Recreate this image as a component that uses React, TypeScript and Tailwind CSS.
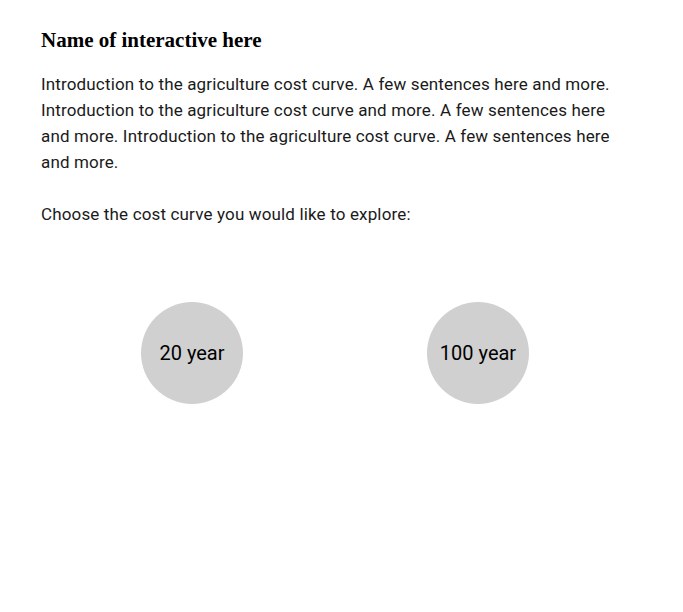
export default function App() {
  const options = ["20 year", "100 year"];

  return (
    <main className="min-h-[612px] bg-white px-[41px] pt-[28px] text-[#1a1a1a]">
      <h1 className="font-['Liberation_Serif',serif] text-[21px] font-bold leading-[24px] text-black">
        Name of interactive here
      </h1>
      <p className="mt-[19px] w-[580px] font-['Roboto',sans-serif] text-[17px] leading-[26px] tracking-[0.15px]">
        Introduction to the agriculture cost curve. A few sentences here and
        more. Introduction to the agriculture cost curve and more. A few
        sentences here and more. Introduction to the agriculture cost curve. A
        few sentences here and more.
      </p>
      <p className="mt-[26px] font-['Roboto',sans-serif] text-[17px] leading-[26px] tracking-[0.15px]">
        Choose the cost curve you would like to explore:
      </p>
      <div className="mt-[75px] grid w-[580px] grid-cols-2 pl-[8px]">
        {options.map((option) => (
          <div key={option} className="flex justify-center">
            <button className="flex h-[102px] w-[102px] items-center justify-center rounded-full bg-[#d0d0d0] font-['Roboto',sans-serif] text-[20px] text-black">
              {option}
            </button>
          </div>
        ))}
      </div>
    </main>
  );
}
